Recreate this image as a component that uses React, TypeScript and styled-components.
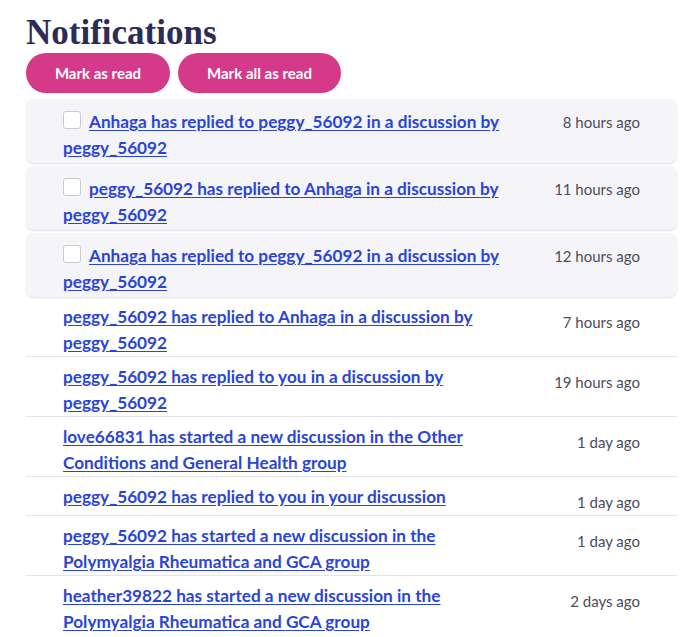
import React from 'react';
import styled, { createGlobalStyle } from 'styled-components';

const GlobalStyle = createGlobalStyle`
  body {
    margin: 0;
    background: #ffffff;
    font-family: Lato, 'Open Sans', sans-serif;
  }
`;

interface Notification {
  text: string;
  time: string;
  unread?: boolean;
}

const notifications: Notification[] = [
  { text: 'Anhaga has replied to peggy_56092 in a discussion by peggy_56092', time: '8 hours ago', unread: true },
  { text: 'peggy_56092 has replied to Anhaga in a discussion by peggy_56092', time: '11 hours ago', unread: true },
  { text: 'Anhaga has replied to peggy_56092 in a discussion by peggy_56092', time: '12 hours ago', unread: true },
  { text: 'peggy_56092 has replied to Anhaga in a discussion by peggy_56092', time: '7 hours ago' },
  { text: 'peggy_56092 has replied to you in a discussion by peggy_56092', time: '19 hours ago' },
  { text: 'love66831 has started a new discussion in the Other Conditions and General Health group', time: '1 day ago' },
  { text: 'peggy_56092 has replied to you in your discussion', time: '1 day ago' },
  { text: 'peggy_56092 has started a new discussion in the Polymyalgia Rheumatica and GCA group', time: '1 day ago' },
  { text: 'heather39822 has started a new discussion in the Polymyalgia Rheumatica and GCA group', time: '2 days ago' },
];

const App = () => {
  return (
    <Page>
      <GlobalStyle />
      <Title>Notifications</Title>
      <Actions>
        <PinkButton>Mark as read</PinkButton>
        <PinkButton wide>Mark all as read</PinkButton>
      </Actions>
      <List>
        <UnreadGroup>
          {notifications
            .filter((n) => n.unread)
            .map((n, i) => (
              <UnreadItem key={i}>
                <Message>
                  <Check type="checkbox" />
                  <NoteLink href="#">{n.text}</NoteLink>
                </Message>
                <Time>{n.time}</Time>
              </UnreadItem>
            ))}
        </UnreadGroup>
        {notifications
          .filter((n) => !n.unread)
          .map((n, i) => (
            <ReadItem key={i}>
              <Message>
                <NoteLink href="#">{n.text}</NoteLink>
              </Message>
              <Time offset>{n.time}</Time>
            </ReadItem>
          ))}
      </List>
    </Page>
  );
};

const Page = styled.div`
  padding: 13px 13px 0 26px;
`;

const Title = styled.h1`
  margin: 0;
  font-family: 'Liberation Serif', 'DejaVu Serif', serif;
  font-size: 35px;
  font-weight: 700;
  color: #2d2c58;
  line-height: 40px;
`;

const Actions = styled.div`
  display: flex;
  gap: 8px;
`;

const PinkButton = styled.button<{ wide?: boolean }>`
  height: 40px;
  width: ${(p) => (p.wide ? '163px' : '144px')};
  border: none;
  border-radius: 20px;
  background: #d43a89;
  color: #ffffff;
  font-family: Lato, sans-serif;
  font-weight: 700;
  font-size: 15px;
  cursor: pointer;
`;

const List = styled.div`
  display: flex;
  flex-direction: column;
  margin-top: 6px;
`;

const UnreadGroup = styled.div`
  display: flex;
  flex-direction: column;
  gap: 3px;
`;

const Row = styled.div`
  display: flex;
  justify-content: space-between;
  align-items: flex-start;
`;

const UnreadItem = styled(Row)`
  padding: 10px 37px 2px 37px;
  background: #f4f4f9;
  border-radius: 8px;
  box-shadow: 0 1px 2px rgba(0, 0, 0, 0.12);
`;

const ReadItem = styled(Row)`
  padding: 7px 37px 0 37px;
  border-bottom: 1px solid #e3e3e8;

  &:last-child {
    border-bottom: none;
  }
`;

const Message = styled.div`
  width: 450px;
  font-size: 17.2px;
  line-height: 26px;
`;

const Check = styled.input`
  appearance: none;
  width: 18px;
  height: 18px;
  margin: 0 8px 0 0;
  border: 1px solid #cacad0;
  border-radius: 3px;
  background: #ffffff;
  vertical-align: -1px;
`;

const NoteLink = styled.a`
  color: #2a45d6;
  font-weight: 700;
  text-decoration: underline;
  text-underline-offset: 2px;
`;

const Time = styled.span<{ offset?: boolean }>`
  font-size: 15px;
  line-height: 26px;
  color: #4c4c60;
  padding-top: ${(p) => (p.offset ? '5px' : '0')};
  white-space: nowrap;
`;

export default App;
